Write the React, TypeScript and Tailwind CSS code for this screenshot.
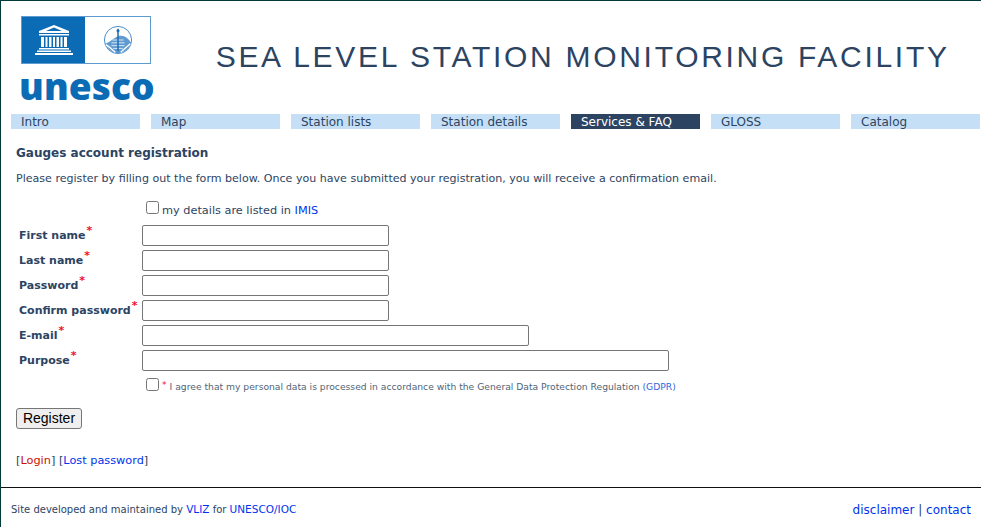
const navy = "#2c4462";
const tabs = ["Intro", "Map", "Station lists", "Station details", "Services & FAQ", "GLOSS", "Catalog"];
const fields = [
  { label: "First name", width: "w-[247px]" },
  { label: "Last name", width: "w-[247px]" },
  { label: "Password", width: "w-[247px]" },
  { label: "Confirm password", width: "w-[247px]" },
  { label: "E-mail", width: "w-[387px]" },
  { label: "Purpose", width: "w-[527px]" },
];

function Logo() {
  return (
    <div className="flex flex-col items-start">
      <div className="flex h-[48px] w-[130px] border border-[#5f9bd0]">
        <div className="flex w-[63px] items-center justify-center bg-[#0b6cb5]">
          <svg width="38" height="30" viewBox="0 0 38 30" fill="#fff">
            <path fillRule="evenodd" d="M19 0 L34 6 L34 8 L4 8 L4 6 Z M19 2.5 L11 6 L27 6 Z" />
            <rect x="4" y="9" width="30" height="1.5" />
            <path d="M6 12h3v10H6zM10.5 12h2v10h-2zM14 12h2.5v10H14zM18 12h2v10h-2zM21.5 12h2.5v10h-2.5zM25.5 12h2v10h-2zM29 12h3v10h-3z" />
            <rect x="4" y="23" width="30" height="1.5" />
            <rect x="2" y="25.5" width="34" height="1.5" />
            <rect x="0" y="28" width="38" height="2" />
          </svg>
        </div>
        <div className="ml-px flex flex-1 items-center justify-center bg-white">
          <svg width="30" height="30" viewBox="0 0 32 32" fill="none">
            <circle cx="16" cy="16" r="14.5" stroke="#3f86c6" strokeWidth="1" />
            <path d="M2 20 C8 18 10 15 16 12 C22 10 27 14 30 19 C28 26 22 30 16 30 C10 30 5 26 2 20 Z" fill="#5f9bd0" />
            <path d="M3 21 C8 24 10 26 13 29 M29 20 C25 24 22 26 19 29" stroke="#fff" strokeWidth="1.4" />
            <path d="M10 16h12M9 19h14M9 22h14M11 25h10" stroke="#fff" strokeWidth="0.8" />
            <path d="M16 4v24" stroke="#1b6cb2" strokeWidth="1.6" />
            <circle cx="16" cy="6" r="1.6" fill="#1b6cb2" />
          </svg>
        </div>
      </div>
      <div className="mt-[2px] -ml-[2px] font-['Open_Sans'] text-[37px] leading-[40px] font-extrabold tracking-[0.1px] text-[#0b6cb5]">
        unesco
      </div>
    </div>
  );
}

export default function App() {
  return (
    <div className="flex h-[527px] w-[981px] flex-col overflow-hidden border-t border-l border-[#023a3a] bg-white font-['DejaVu_Sans',sans-serif] text-[11px] text-[#2c4462]">
      <header className="flex h-[113px] items-start pt-[15px] pl-[20px]">
        <Logo />
        <h1 className="mt-[24px] ml-[61px] font-['Liberation_Sans',sans-serif] text-[30px] leading-[34px] tracking-[2.7px] whitespace-nowrap text-[#2c4462]">
          SEA LEVEL STATION MONITORING FACILITY
        </h1>
      </header>

      <nav className="flex gap-[11px] pl-[10px]">
        {tabs.map((t, i) => (
          <div
            key={t}
            className={
              i === 4
                ? "h-[15px] w-[129px] bg-[#2c4462] pl-[10px] text-[12px] leading-[16px] text-white"
                : "h-[15px] w-[129px] bg-[#c5dff6] pl-[10px] text-[12px] leading-[16px] text-[#2c4462]"
            }
          >
            {t}
          </div>
        ))}
      </nav>

      <main className="flex-1 pl-[15px]">
        <h2 className="mt-[17px] text-[12px] leading-[15px] font-bold" style={{ color: navy }}>
          Gauges account registration
        </h2>
        <p className="mt-[11px] text-[11.07px] leading-[14px]">
          Please register by filling out the form below. Once you have submitted your registration, you will receive a confirmation email.
        </p>

        <div className="mt-[16px] flex h-[16px] items-start pl-[130px]">
          <input type="checkbox" className="-mt-px h-[13px] w-[13px] appearance-auto" />
          <span className="ml-[3px] pt-px text-[11.3px] leading-[16px]">
            my details are listed in <a className="text-[#0033ee]">IMIS</a>
          </span>
        </div>

        <div className="mt-[7px] flex flex-col gap-[4px]">
          {fields.map((f) => (
            <div key={f.label} className="flex h-[21px] items-center">
              <label className="w-[126px] pt-[2px] pl-[3px] text-[11px] font-bold whitespace-nowrap">
                {f.label}
                <sup className="relative -top-[1px] ml-px align-super text-[11px] font-bold text-[#ee1133]">*</sup>
              </label>
              <input
                type="text"
                className={`h-[21px] rounded-[2px] border border-[#767676] bg-white ${f.width}`}
              />
            </div>
          ))}
        </div>

        <div className="mt-[6px] flex h-[16px] items-start pl-[130px]">
          <input type="checkbox" className="mt-px h-[13px] w-[13px] appearance-auto" />
          <span className="ml-[3px] pt-[2px] text-[9.2px] leading-[16px] whitespace-nowrap text-[#4f6478]">
            <span className="relative -top-[2px] mr-[3px] text-[#ee1133]">*</span>
            I agree that my personal data is processed in accordance with the General Data Protection Regulation{" "}
            <a className="text-[#3366dd]">(GDPR)</a>
          </span>
        </div>

        <button className="mt-[15px] block h-[21px] w-[66px] rounded-[3px] border border-[#767676] bg-[#efefef] font-['Liberation_Sans',sans-serif] text-[14px] leading-[19px] text-black">
          Register
        </button>

        <p className="mt-[25px] text-[11.3px] leading-[14px]">
          [<a className="text-[#cc1100]">Login</a>] [<a className="text-[#0033ee]">Lost password</a>]
        </p>
      </main>

      <footer className="flex h-[40px] items-center justify-between border-t border-[#111] pr-[10px] pt-[4px] pl-[10px]">
        <span className="text-[10px]">
          Site developed and maintained by <a className="text-[10.5px] text-[#0033ee]">VLIZ</a> for <a className="text-[10.5px] text-[#0033ee]">UNESCO/IOC</a>
        </span>
        <span className="text-[12px] text-[#2c4462]">
          <a className="text-[#0033ee]">disclaimer</a> | <a className="text-[#0033ee]">contact</a>
        </span>
      </footer>
    </div>
  );
}
